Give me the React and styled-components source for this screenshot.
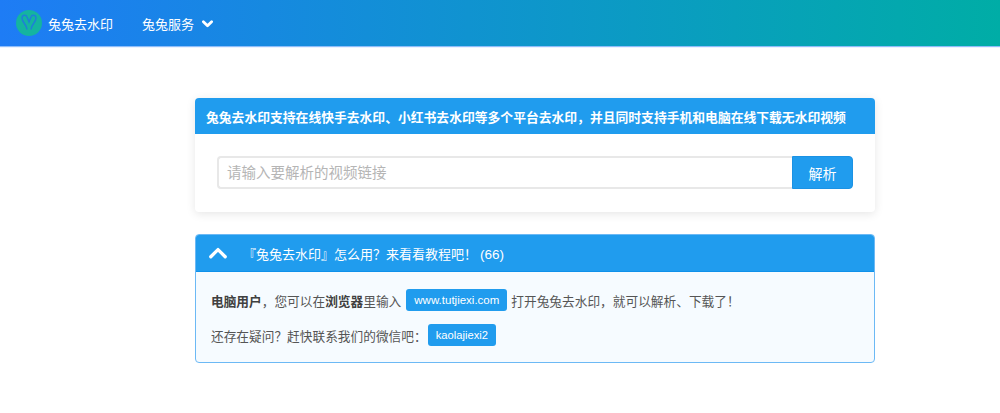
import styled, { createGlobalStyle } from "styled-components";

const GlobalStyle = createGlobalStyle`
  html, body {
    margin: 0;
    padding: 0;
    background: #fff;
  }
  body {
    font-family: "Liberation Sans", "Noto Sans CJK SC", sans-serif;
    color: #4a4a4a;
    overflow: hidden;
  }
`;

const NavBar = styled.nav`
  display: flex;
  align-items: center;
  height: 46px;
  padding-left: 16px;
  background: linear-gradient(90deg, #1e7cf5 0%, #00ada6 100%);
  box-shadow: 0 1px 1px rgba(30, 124, 245, 0.5);
  color: #fff;
  font-size: 13px;
`;

const Brand = styled.div`
  display: flex;
  align-items: center;
  gap: 6px;
  width: 126px;
`;

const ServiceMenu = styled.div`
  display: flex;
  align-items: center;
  gap: 8px;
`;

const Main = styled.main`
  width: 680px;
  margin: 52px 0 0 195px;
  display: flex;
  flex-direction: column;
  gap: 22px;
`;

const SearchCard = styled.section`
  background: #fff;
  border-radius: 4px;
  box-shadow: 0 2px 10px rgba(10, 10, 10, 0.1);
  overflow: hidden;
`;

const CardHeading = styled.h1`
  margin: 0;
  height: 36px;
  padding-left: 11px;
  display: flex;
  align-items: center;
  background: #209cee;
  color: #fff;
  font-size: 12.8px;
  font-weight: 700;
`;

const SearchRow = styled.div`
  display: flex;
  padding: 22px 22px 23px;
`;

const SearchInput = styled.input`
  flex: 1;
  min-width: 0;
  height: 33px;
  box-sizing: border-box;
  padding: 0 8px;
  border: 2px solid #e8e8e8;
  border-right: 0;
  border-radius: 4px 0 0 4px;
  outline: 0;
  font: 14.5px "Liberation Sans", "Noto Sans CJK SC", sans-serif;
  &::placeholder {
    color: #b5b5b5;
    opacity: 1;
  }
`;

const SearchButton = styled.button`
  width: 61px;
  height: 33px;
  box-sizing: border-box;
  padding: 0;
  border: 1px solid #1b92e4;
  border-radius: 0 4px 4px 0;
  background: #209cee;
  color: #fff;
  font: 14px "Liberation Sans", "Noto Sans CJK SC", sans-serif;
`;

const GuidePanel = styled.section`
  border: 1px solid #6cb9f5;
  border-radius: 4px;
  background: #f6fbff;
  overflow: hidden;
`;

const GuideHeader = styled.header`
  height: 36px;
  display: flex;
  align-items: center;
  padding-left: 13px;
  gap: 16px;
  background: #209cee;
  border-bottom: 1px solid #0f91ea;
  color: #fff;
  font-size: 13px;
`;

const HitCount = styled.span`
  margin-left: 3px;
  font-size: 13.5px;
`;

const GuideBody = styled.div`
  padding: 17px 15px 16px;
  font-size: 12.7px;
  color: #555;
  display: flex;
  flex-direction: column;
  gap: 13px;
`;

const GuideLine = styled.p`
  margin: 0;
  height: 22px;
  display: flex;
  align-items: center;
  gap: 4px;
  white-space: pre;
`;

const Strong = styled.strong`
  color: #404040;
  font-weight: 700;
`;

const Tag = styled.span`
  display: inline-flex;
  align-items: center;
  height: 22px;
  margin-left: ${({ $tight }) => ($tight ? "-3px" : "1px")};
  padding: 0 8px;
  border-radius: 3px;
  background: #209cee;
  color: #fff;
  font-size: ${({ $tight }) => ($tight ? "11.2px" : "11.5px")};
`;

const LogoMark = () => (
  <svg width="26" height="26" viewBox="0 0 26 26">
    <circle cx="13" cy="13" r="13" fill="#14b4a0" />
    <path
      d="M11 19.5 C11 14.5 6 12.5 6 8 C6 4.8 10 4.2 11 7 L13 12 L15 7 C16 4.2 20 4.8 20 8 C20 12.5 15 14.5 15 19.5"
      fill="none"
      stroke="#1e7fd8"
      strokeWidth="1.5"
    />
  </svg>
);

const Chevron = ({ up, size = 11, weight = 3 }) => (
  <svg width={size} height={size} viewBox="0 0 12 12">
    <path
      d={up ? "M1.2 8.5 L6 3.7 L10.8 8.5" : "M1.5 4 L6 8.5 L10.5 4"}
      fill="none"
      stroke="#fff"
      strokeWidth={weight}
      strokeLinecap="round"
      strokeLinejoin="round"
    />
  </svg>
);

export default function App() {
  return (
    <>
      <GlobalStyle />
      <NavBar>
        <Brand>
          <LogoMark />
          <span>兔兔去水印</span>
        </Brand>
        <ServiceMenu>
          <span>兔兔服务</span>
          <Chevron />
        </ServiceMenu>
      </NavBar>
      <Main>
        <SearchCard>
          <CardHeading>
            兔兔去水印支持在线快手去水印、小红书去水印等多个平台去水印，并且同时支持手机和电脑在线下载无水印视频
          </CardHeading>
          <SearchRow>
            <SearchInput placeholder="请输入要解析的视频链接" />
            <SearchButton>解析</SearchButton>
          </SearchRow>
        </SearchCard>
        <GuidePanel>
          <GuideHeader>
            <Chevron up size={18} weight={2.2} />
            <span>
              『兔兔去水印』怎么用？来看看教程吧！<HitCount>(66)</HitCount>
            </span>
          </GuideHeader>
          <GuideBody>
            <GuideLine>
              <span>
                <Strong>电脑用户</Strong>，您可以在<Strong>浏览器</Strong>里输入
              </span>
              <Tag>www.tutjiexi.com</Tag>
              <span>打开兔兔去水印，就可以解析、下载了！</span>
            </GuideLine>
            <GuideLine>
              <span>还存在疑问？赶快联系我们的微信吧：</span>
              <Tag $tight>kaolajiexi2</Tag>
            </GuideLine>
          </GuideBody>
        </GuidePanel>
      </Main>
    </>
  );
}
